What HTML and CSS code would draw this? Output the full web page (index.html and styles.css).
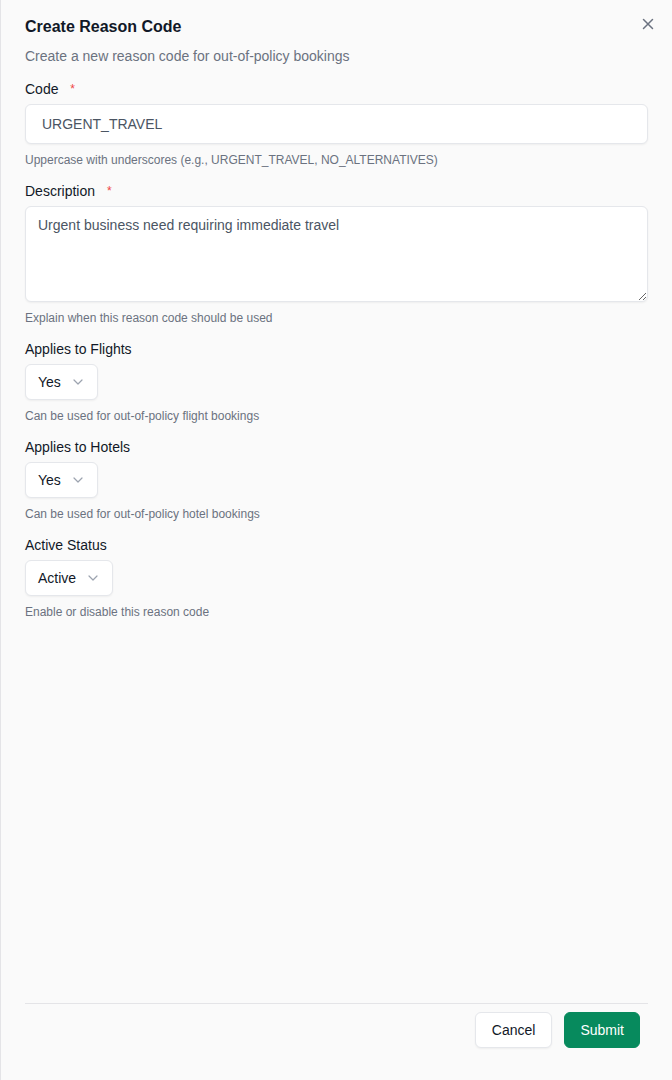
FILE: index.html
```html
<!DOCTYPE html>
<html lang="en">
<head>
    <meta charset="UTF-8">
    <meta name="viewport" content="width=device-width, initial-scale=1.0">
    <title>Create Reason Code</title>
    <link rel="stylesheet" href="styles.css">
</head>
<body>
    <div class="sheet">
        <div class="sheet-header">
            <h2 class="sheet-title">Create Reason Code</h2>
            <p class="sheet-desc">Create a new reason code for out-of-policy bookings</p>
            <button class="close-btn" aria-label="Close">
                <svg width="12" height="12" viewBox="0 0 12 12" fill="none" stroke="currentColor" stroke-width="1.5" stroke-linecap="round">
                    <path d="M1.5 1.5l9 9M10.5 1.5l-9 9"/>
                </svg>
            </button>
        </div>

        <form class="sheet-body">
            <div class="form-group">
                <label for="code">Code <span class="req">*</span></label>
                <input type="text" id="code" class="input" value="URGENT_TRAVEL">
                <p class="hint">Uppercase with underscores (e.g., URGENT_TRAVEL, NO_ALTERNATIVES)</p>
            </div>

            <div class="form-group">
                <label for="description">Description <span class="req">*</span></label>
                <textarea id="description" class="textarea">Urgent business need requiring immediate travel</textarea>
                <p class="hint">Explain when this reason code should be used</p>
            </div>

            <div class="form-group">
                <label>Applies to Flights</label>
                <button type="button" class="select">
                    <span>Yes</span>
                    <svg class="chevron" width="10" height="6" viewBox="0 0 10 6" fill="none" stroke="currentColor" stroke-width="1.2" stroke-linecap="round" stroke-linejoin="round"><path d="M1 1l4 4 4-4"/></svg>
                </button>
                <p class="hint">Can be used for out-of-policy flight bookings</p>
            </div>

            <div class="form-group">
                <label>Applies to Hotels</label>
                <button type="button" class="select">
                    <span>Yes</span>
                    <svg class="chevron" width="10" height="6" viewBox="0 0 10 6" fill="none" stroke="currentColor" stroke-width="1.2" stroke-linecap="round" stroke-linejoin="round"><path d="M1 1l4 4 4-4"/></svg>
                </button>
                <p class="hint">Can be used for out-of-policy hotel bookings</p>
            </div>

            <div class="form-group">
                <label>Active Status</label>
                <button type="button" class="select">
                    <span>Active</span>
                    <svg class="chevron" width="10" height="6" viewBox="0 0 10 6" fill="none" stroke="currentColor" stroke-width="1.2" stroke-linecap="round" stroke-linejoin="round"><path d="M1 1l4 4 4-4"/></svg>
                </button>
                <p class="hint">Enable or disable this reason code</p>
            </div>
        </form>

        <div class="sheet-footer">
            <button class="btn btn-outline">Cancel</button>
            <button class="btn btn-primary">Submit</button>
        </div>
    </div>
</body>
</html>
```

FILE: styles.css
```css
* {
    box-sizing: border-box;
}
body {
    margin: 0;
    font-family: "Liberation Sans", Arial, sans-serif;
    color: #111827;
    background-color: #fafafa;
}
.sheet {
    min-height: 100vh;
    display: flex;
    flex-direction: column;
    border-left: 1px solid #e4e4e7;
    padding: 0 24px 32px 24px;
}
.sheet-header {
    position: relative;
    padding-top: 15px;
}
.sheet-title {
    margin: 0;
    font-size: 16px;
    line-height: 24px;
    font-weight: bold;
    color: #111827;
}
.sheet-desc {
    margin: 7px 0 0;
    font-size: 14px;
    line-height: 20px;
    color: #6b7280;
}
.close-btn {
    position: absolute;
    top: 18px;
    right: -6px;
    width: 12px;
    height: 12px;
    padding: 0;
    border: none;
    background: none;
    color: #6b7280;
    cursor: pointer;
    display: flex;
}
.sheet-body {
    flex: 1;
    margin: 13px 0 0;
}
.form-group {
    margin-bottom: 13px;
}
.form-group label {
    display: block;
    font-size: 14px;
    line-height: 20px;
    color: #111827;
    margin-bottom: 5px;
}
.req {
    color: #ef4444;
    font-size: 12px;
    margin-left: 8px;
    vertical-align: top;
}
.input, .textarea {
    display: block;
    width: 100%;
    border: 1px solid #e5e7eb;
    border-radius: 6px;
    background-color: #fff;
    box-shadow: 0 1px 2px rgba(0, 0, 0, 0.05);
    font-family: inherit;
    font-size: 14px;
    color: #4b5563;
}
.input {
    height: 40px;
    padding: 0 16px;
}
.textarea {
    height: 96px;
    padding: 8px 12px;
    line-height: 20px;
    resize: vertical;
}
.select {
    display: inline-flex;
    align-items: center;
    gap: 12px;
    height: 36px;
    padding: 0 14px 0 12px;
    border: 1px solid #e5e7eb;
    border-radius: 6px;
    background-color: #fff;
    box-shadow: 0 1px 2px rgba(0, 0, 0, 0.05);
    font-family: inherit;
    font-size: 14px;
    color: #111827;
}
.chevron {
    color: #9ca3af;
}
.hint {
    margin: 8px 0 0;
    font-size: 12px;
    line-height: 16px;
    color: #6b7280;
}
.sheet-footer {
    display: flex;
    justify-content: flex-end;
    gap: 12px;
    border-top: 1px solid #e4e4e7;
    padding: 8px 8px 0 0;
}
.btn {
    height: 36px;
    padding: 0 16px;
    border-radius: 6px;
    font-family: inherit;
    font-size: 14px;
    cursor: pointer;
}
.btn-outline {
    background-color: #fff;
    border: 1px solid #e5e7eb;
    color: #111827;
    box-shadow: 0 1px 2px rgba(0, 0, 0, 0.05);
}
.btn-primary {
    padding: 0 15px;
    background-color: #078a5d;
    border: 1px solid #078a5d;
    color: #fff;
}
```
